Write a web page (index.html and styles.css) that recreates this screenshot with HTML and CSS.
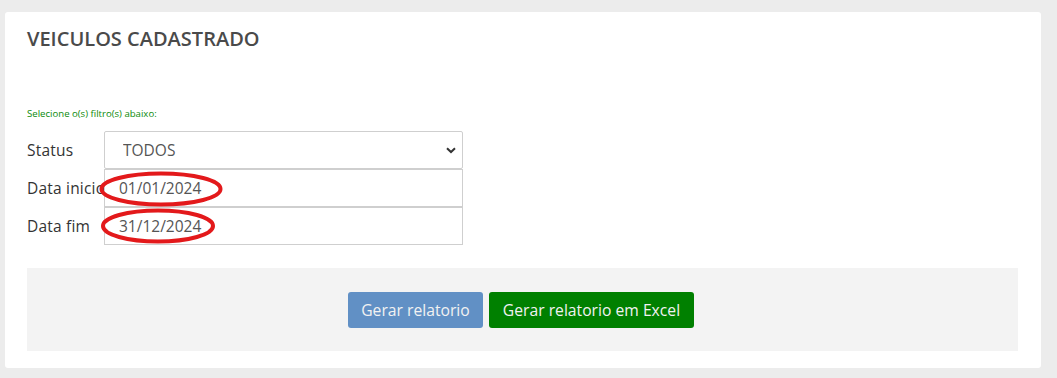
FILE: index.html
```html
<!DOCTYPE html>
<html lang="pt-BR">
<head>
<meta charset="utf-8">
<title>Veiculos cadastrado</title>
<link rel="stylesheet" href="styles.css">
</head>
<body>
<div class="card">
  <h1 class="title">VEICULOS CADASTRADO</h1>
  <p class="hint">Selecione o(s) filtro(s) abaixo:</p>
  <form class="filters">
    <div class="row">
      <label class="lbl">Status</label>
      <div class="select-wrap">
        <select class="field select">
          <option>TODOS</option>
        </select>
        <svg class="chev" width="10" height="7" viewBox="0 0 10 7"><path d="M1 1.2 L5 5 L9 1.2" fill="none" stroke="#333" stroke-width="2"/></svg>
      </div>
    </div>
    <div class="row">
      <label class="lbl">Data inicio</label>
      <div class="input-wrap">
        <input class="field" type="text" value="01/01/2024">
        <svg class="mark mark1" width="128" height="38" viewBox="0 0 128 38"><ellipse cx="63" cy="20" rx="59.5" ry="15.5" fill="none" stroke="#e3191b" stroke-width="4"/></svg>
      </div>
    </div>
    <div class="row">
      <label class="lbl">Data fim</label>
      <div class="input-wrap">
        <input class="field" type="text" value="31/12/2024">
        <svg class="mark mark2" width="122" height="38" viewBox="0 0 122 38"><ellipse cx="59" cy="19" rx="55" ry="15.5" fill="none" stroke="#e3191b" stroke-width="4"/></svg>
      </div>
    </div>
  </form>
  <div class="actions">
    <button class="btn btn-blue" type="button">Gerar relatorio</button>
    <button class="btn btn-green" type="button">Gerar relatorio em Excel</button>
  </div>
</div>
</body>
</html>
```
FILE: styles.css
```css
html, body {
  margin: 0;
  padding: 0;
}
body {
  background: #ececec;
  font-family: "Open Sans", "Liberation Sans", sans-serif;
  padding: 12px 16px 10px 5px;
  height: 378px;
  box-sizing: border-box;
}
.card {
  background: #fff;
  border-radius: 3px;
  padding: 17px 23px 17px 22px;
  height: 356px;
  box-sizing: border-box;
}
.title {
  margin: 0;
  font-size: 20px;
  font-weight: 600;
  color: #4a4a4a;
  line-height: 20px;
}
.hint {
  margin: 58px 0 0 0;
  font-size: 9.6px;
  line-height: 14px;
  color: #0a8a0a;
}
.filters {
  margin-top: 10px;
}
.row {
  display: flex;
  align-items: center;
  height: 38px;
}
.lbl {
  flex: 0 0 77px;
  width: 77px;
  white-space: nowrap;
  font-size: 15.5px;
  letter-spacing: 0.2px;
  color: #333;
}
.select-wrap, .input-wrap {
  position: relative;
  width: 359px;
  height: 38px;
}
.field {
  box-sizing: border-box;
  width: 359px;
  height: 38px;
  margin: 0;
  border: 1px solid #cfcfcf;
  border-radius: 2px;
  background: #fff;
  font-family: "Open Sans", "Liberation Sans", sans-serif;
  font-size: 15.5px;
  color: #555;
  padding: 0 14px;
  outline: none;
}
.input-wrap .field {
  border-radius: 0;
}
.select {
  -webkit-appearance: none;
  appearance: none;
  padding: 0 18px;
}
.chev {
  position: absolute;
  right: 7px;
  top: 16px;
  pointer-events: none;
}
.mark {
  position: absolute;
  pointer-events: none;
}
.mark1 {
  left: -6px;
  top: 0;
}
.mark2 {
  left: -5px;
  top: 0;
}
.actions {
  margin-top: 23px;
  background: #f3f3f3;
  height: 83px;
  display: flex;
  align-items: center;
  justify-content: center;
  gap: 6px;
  padding-right: 3px;
}
.btn {
  height: 36px;
  border: none;
  border-radius: 3px;
  font-family: "Open Sans", "Liberation Sans", sans-serif;
  font-size: 15.7px;
  color: #f2f2f2;
  padding: 0 10px;
  cursor: pointer;
}
.btn-blue {
  background: #6190c5;
  width: 135px;
}
.btn-green {
  background: #008000;
  width: 205px;
}
```
